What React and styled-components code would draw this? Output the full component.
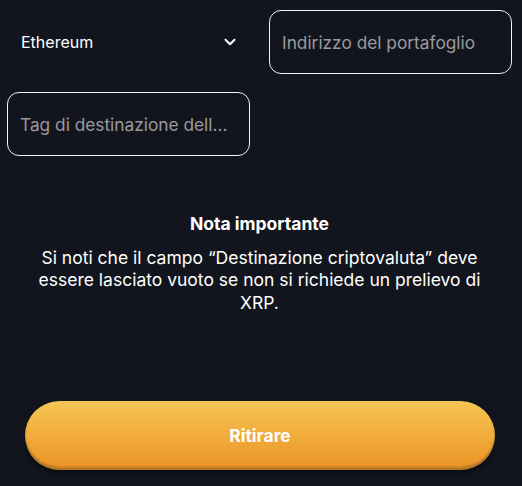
import React from "react";
import styled, { createGlobalStyle } from "styled-components";

const Global = createGlobalStyle`
  html, body { margin: 0; padding: 0; background: #12151d; }
  body { font-family: Inter, "Noto Sans", sans-serif; color: #fff; }
  * { box-sizing: border-box; }
`;

const Page = styled.div`
  width: 522px;
  height: 486px;
  background: #12151d;
  padding: 10px 10px 0 7px;
  display: flex;
  flex-direction: column;
`;

const Grid = styled.div`
  display: grid;
  grid-template-columns: 243px 243px;
  column-gap: 19px;
  row-gap: 18px;
`;

const Select = styled.div`
  height: 64px;
  display: flex;
  align-items: center;
  justify-content: space-between;
  padding: 0 14px 0 14px;
  font-size: 16px;
  color: #fff;
`;

const Field = styled.div`
  height: 64px;
  border: 1px solid #f2f2f2;
  border-radius: 12px;
  display: flex;
  align-items: center;
  padding: 0 12px;
  font-size: 17.3px;
  color: #9b9b9f;
  white-space: nowrap;
  overflow: hidden;
  text-overflow: ellipsis;
`;

const Note = styled.div`
  margin-top: 57px;
  display: flex;
  flex-direction: column;
  align-items: center;
  text-align: center;
  padding: 0 20px;
`;

const NoteTitle = styled.div`
  font-weight: 700;
  font-size: 17.5px;
  line-height: 22.5px;
`;

const NoteText = styled.div`
  margin-top: 11px;
  font-size: 17.5px;
  line-height: 22.5px;
`;

const Button = styled.button`
  margin: 87px 17px 0 18px;
  height: 69px;
  border: none;
  border-radius: 35px;
  background: linear-gradient(180deg, #f6c654 0%, #eb9224 100%);
  box-shadow: 0 4px 4px rgba(0, 0, 0, 0.35), inset 0 -3px 2px rgba(120, 90, 40, 0.5);
  color: #fff;
  font-family: Inter, "Noto Sans", sans-serif;
  font-weight: 700;
  font-size: 17.5px;
`;

const Chevron = () => (
  <svg width="12" height="8" viewBox="0 0 12 8" fill="none" stroke="#fff" strokeWidth="2" strokeLinecap="round" strokeLinejoin="round">
    <path d="M1.5 1.8L6 6.2l4.5-4.4" />
  </svg>
);

export default function App() {
  return (
    <>
      <Global />
      <Page>
        <Grid>
          <Select>
            <span>Ethereum</span>
            <Chevron />
          </Select>
          <Field>Indirizzo del portafoglio</Field>
          <Field>Tag di destinazione dell...</Field>
        </Grid>
        <Note>
          <NoteTitle>Nota importante</NoteTitle>
          <NoteText>
            Si noti che il campo “Destinazione criptovaluta” deve essere lasciato vuoto se non si richiede un prelievo di XRP.
          </NoteText>
        </Note>
        <Button>Ritirare</Button>
      </Page>
    </>
  );
}
